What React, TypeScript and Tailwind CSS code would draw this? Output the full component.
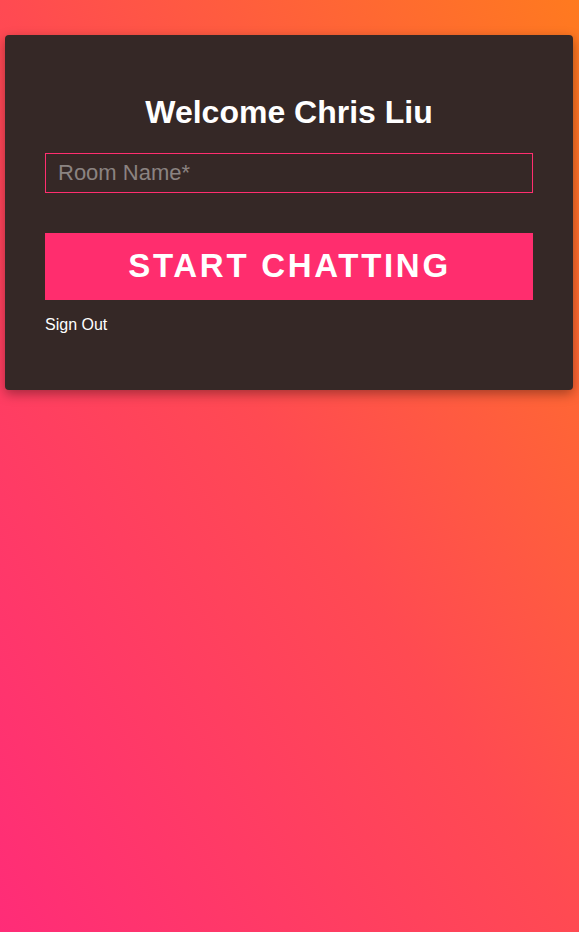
export default function App() {
  return (
    <div
      className="min-h-[932px] w-full pt-[35px] px-[5px] pr-[6px]"
      style={{ fontFamily: '"Liberation Sans", Arial, sans-serif', background: 'linear-gradient(to top right, #ff2c78 0%, #ff4a52 50%, #ff7a1f 100%)' }}
    >
      <div className="rounded-[4px] bg-[#352826] px-[40px] pt-[59px] pb-[55px] shadow-[0_4px_12px_rgba(0,0,0,0.35)]">
        <h1 className="text-center text-[32px] font-bold leading-[37px] text-white">Welcome Chris Liu</h1>
        <input
          className="mt-[22px] block h-[40px] w-full border border-[#ff2e6f] bg-transparent px-[12px] text-[22px] text-white placeholder:text-[#8b8381] outline-none"
          placeholder="Room Name*"
        />
        <button className="mt-[40px] block h-[67px] w-full bg-[#ff2d6e] pb-[2px] pl-[1px] text-[33px] font-bold tracking-[2.7px] text-white">
          START CHATTING
        </button>
        <div className="mt-[15px] text-[16px] leading-[20px] text-white">Sign Out</div>
      </div>
    </div>
  );
}
